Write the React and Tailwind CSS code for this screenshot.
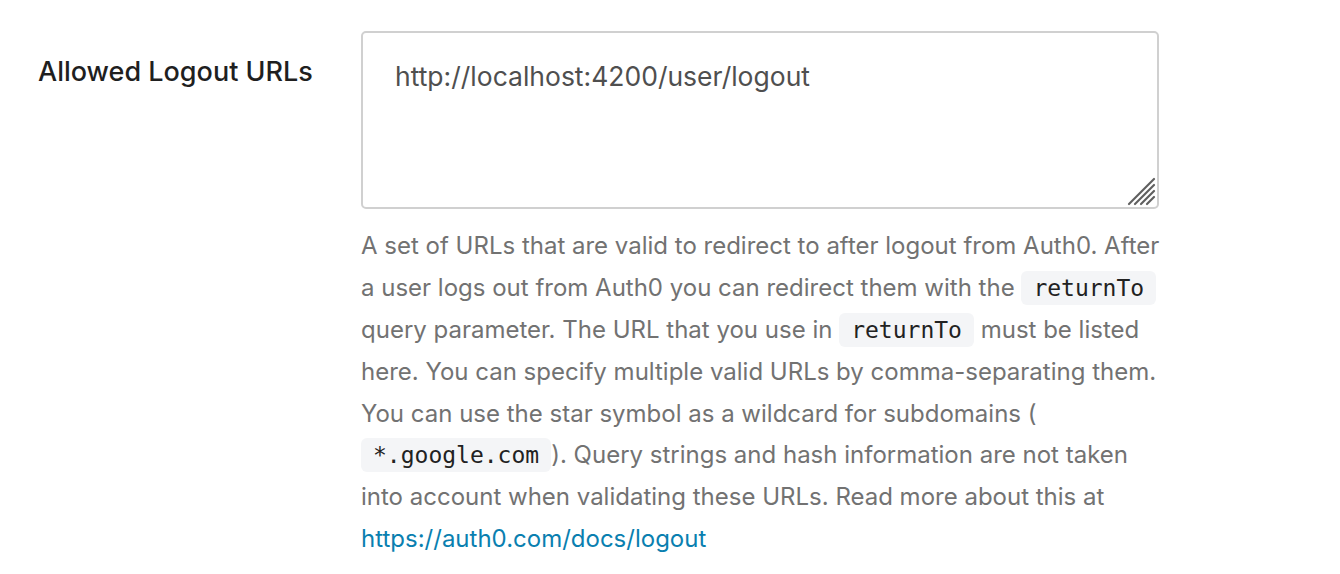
export default function App() {
  const code = 'rounded-[6px] bg-[#f4f5f7] px-[12px] py-[4px] font-["DejaVu_Sans_Mono",monospace] text-[23px] leading-none text-[#222]'
  const line = 'h-[41.9px] whitespace-nowrap'
  return (
    <div className="min-h-screen bg-white font-['Inter',sans-serif]">
      <div className="flex pt-[31px]">
        <div className="w-[361px] shrink-0 pl-[38px] pt-[26px]">
          <div className="text-[27px] font-medium leading-[30px] text-[#1f1f1f]">
            Allowed Logout URLs
          </div>
        </div>
        <div className="w-[798px] shrink-0">
          <div className="relative h-[178px] rounded-[5px] border-2 border-[#d0d0d0] pl-[32px] pt-[27px]">
            <div className="text-[26.5px] leading-[32px] text-[#4f4f4f]">http://localhost:4200/user/logout</div>
            {/* resize grip */}
            <svg className="absolute bottom-[1px] right-[1px]" width="30" height="30" viewBox="0 0 30 30">
              <g stroke="#5f5f5f" strokeWidth="2.2" strokeLinecap="round">
                <line x1="3" y1="28" x2="28" y2="3" />
                <line x1="9" y1="28" x2="28" y2="9" />
                <line x1="15" y1="28" x2="28" y2="15" />
                <line x1="21" y1="28" x2="28" y2="21" />
              </g>
            </svg>
          </div>
          <div className="mt-[16px] text-[24px] leading-[41.9px] text-[#727272]">
            <div className={line}>A set of URLs that are valid to redirect to after logout from Auth0. After</div>
            <div className={line}>
              a user logs out from Auth0 you can redirect them with the <code className={code}>returnTo</code>
            </div>
            <div className={line}>
              query parameter. The URL that you use in <code className={code}>returnTo</code> must be listed
            </div>
            <div className={line}>here. You can specify multiple valid URLs by comma-separating them.</div>
            <div className={line}>You can use the star symbol as a wildcard for subdomains (</div>
            <div className={line}>
              <code className={code}>*.google.com</code>). Query strings and hash information are not taken
            </div>
            <div className={line}>into account when validating these URLs. Read more about this at</div>
            <div className={line}>
              <a className="text-[#0a7fb0]">https://auth0.com/docs/logout</a>
            </div>
          </div>
        </div>
      </div>
    </div>
  )
}
